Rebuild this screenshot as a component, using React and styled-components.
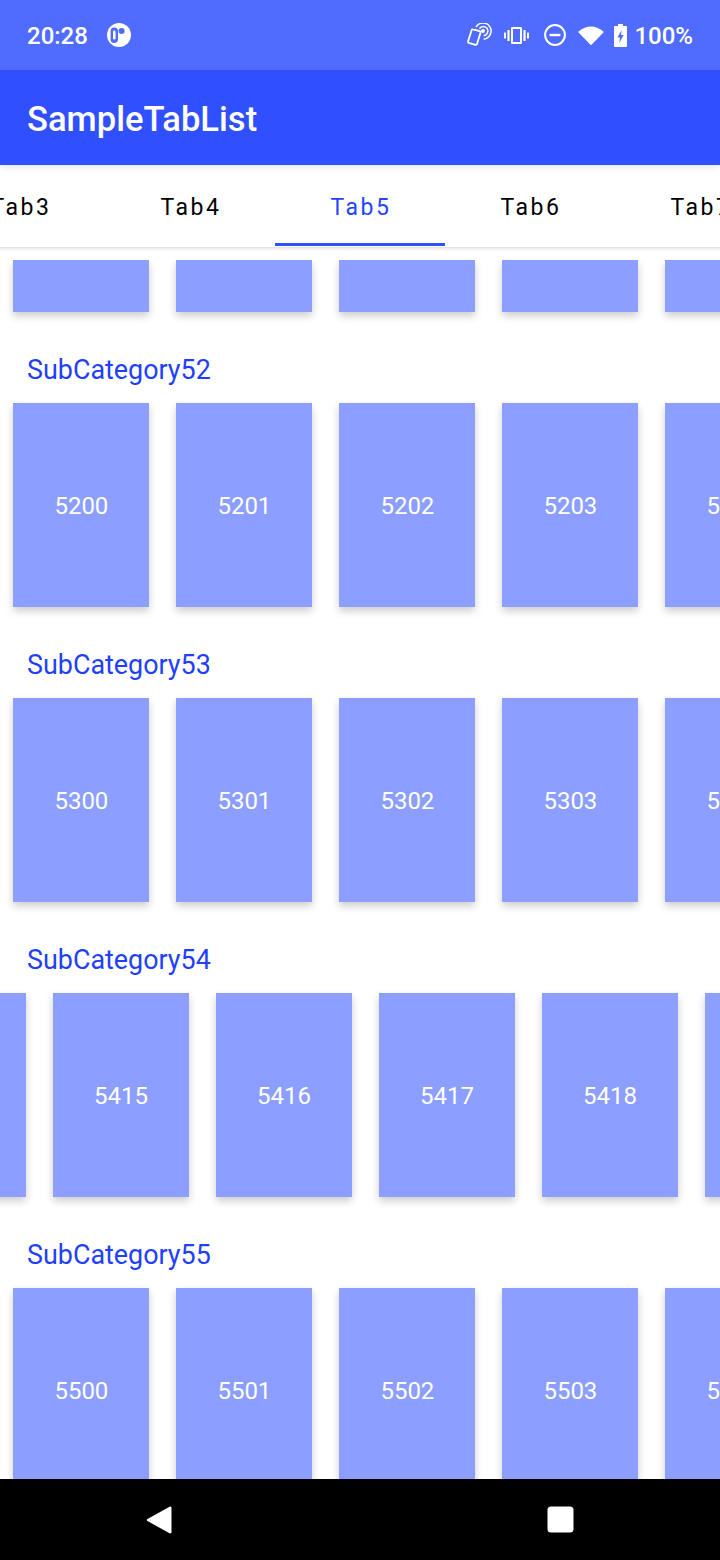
import React from 'react'
import styled, { createGlobalStyle } from 'styled-components'

const GlobalStyle = createGlobalStyle`
  html, body { margin: 0; padding: 0; background: #fff; }
  body { font-family: Roboto, "Liberation Sans", sans-serif; }
`

const Screen = styled.div`
  width: 720px;
  height: 1560px;
  display: flex;
  flex-direction: column;
  overflow: hidden;
  background: #fff;
`

const StatusBar = styled.div`
  height: 70px;
  flex: none;
  display: flex;
  align-items: center;
  justify-content: space-between;
  padding: 0 27px;
  background: #4f6cff;
  color: #fff;
  font-size: 24px;
  font-weight: 500;
`

const StatusLeft = styled.div`
  display: flex;
  align-items: center;
  gap: 19px;
`

const StatusRight = styled.div`
  display: flex;
  align-items: center;
`

const StatusText = styled.span`
  padding-top: 2px;
  margin-left: ${p => p.$gap || 0}px;
`

const StatusIcon = styled.svg`
  display: block;
  flex: none;
  margin-left: ${p => p.$gap || 0}px;
`

const AppBar = styled.div`
  height: 95px;
  flex: none;
  box-sizing: border-box;
  display: flex;
  align-items: center;
  padding: 3px 27px 0;
  background: #304ffe;
  color: #fff;
  font-size: 34.6px;
  font-weight: 500;
  position: relative;
  z-index: 2;
  box-shadow: 0 2px 6px rgba(0, 0, 0, 0.12);
`

const TabStrip = styled.div`
  height: 82px;
  flex: none;
  display: flex;
  margin-left: -65px;
  width: 850px;
  background: #fff;
  position: relative;
  z-index: 1;
  box-shadow: 0 1px 4px rgba(0, 0, 0, 0.18);
`

const Tab = styled.div`
  width: 170px;
  flex: none;
  box-sizing: border-box;
  display: flex;
  align-items: center;
  justify-content: center;
  font-size: 23px;
  font-weight: 450;
  letter-spacing: 2.5px;
  color: ${p => (p.$active ? '#2444ff' : '#000')};
  border-bottom: 3px solid ${p => (p.$active ? '#304ffe' : 'transparent')};
  padding: 6px 0 0 2px;
  margin-bottom: 1px;
`

const Feed = styled.div`
  flex: 1;
  min-height: 0;
  margin-top: 13px;
  overflow: hidden;
`

const Label = styled.div`
  height: 34px;
  line-height: 36px;
  margin: 20px 0 4px 27px;
  font-size: 26.9px;
  color: #1f3fff;
`

const Row = styled.div`
  display: flex;
  gap: 27px;
  padding: ${p => (p.$clipped ? 0 : 13)}px 0 20px;
  overflow: hidden;

  > :first-child {
    margin-left: ${p => p.$offset}px;
  }
`

const Card = styled.div`
  width: 136px;
  height: ${p => p.$height}px;
  flex: none;
  box-sizing: border-box;
  padding-top: 2px;
  display: flex;
  align-items: center;
  justify-content: center;
  background: #8c9eff;
  color: #fff;
  font-size: 24px;
  box-shadow: 0 4px 8px rgba(0, 0, 0, 0.2);
`

const NavBar = styled.div`
  height: 81px;
  flex: none;
  display: flex;
  align-items: center;
  justify-content: space-between;
  padding: 0 146px;
  background: #000;
`

const sections = [
  { name: 'SubCategory52', first: 5200, offset: 13.4 },
  { name: 'SubCategory53', first: 5300, offset: 13.4 },
  { name: 'SubCategory54', first: 5414, offset: -110 },
  { name: 'SubCategory55', first: 5500, offset: 13.4 },
]

const PhoneTapIcon = () => (
  <StatusIcon width="25" height="24" viewBox="0 0 25 24" fill="none" stroke="#fff">
    <path d="M6 6.4 L12.6 8.2 Q13.8 8.6 13.5 9.8 L10 21 Q9.6 22.2 8.4 21.8 L1.9 19.9 Q0.7 19.5 1.1 18.3 L4.6 7.2 Q5 6 6 6.4 Z" strokeWidth="1.8" />
    <path d="M9 4.2 A8 8 0 1 1 16.6 16" strokeWidth="1.5" />
    <path d="M12.4 5.6 A4.6 4.6 0 1 1 16.6 12.6" strokeWidth="1.5" />
    <circle cx="16" cy="8" r="2" fill="#fff" stroke="none" />
  </StatusIcon>
)

const VibrateIcon = () => (
  <StatusIcon $gap={12} width="25" height="17" viewBox="0 0 25 17" fill="#fff">
    <path d="M8 0 H17 Q18 0 18 1 V16 Q18 17 17 17 H8 Q7 17 7 16 V1 Q7 0 8 0 Z M9 2 V15 H16 V2 Z" fillRule="evenodd" />
    <rect x="3.4" y="3" width="2.2" height="11" rx="0.6" />
    <rect x="19.4" y="3" width="2.2" height="11" rx="0.6" />
    <rect x="0" y="5.5" width="2" height="6" rx="0.6" />
    <rect x="23" y="5.5" width="2" height="6" rx="0.6" />
  </StatusIcon>
)

const DndIcon = () => (
  <StatusIcon $gap={15} width="22" height="22" viewBox="0 0 22 22" fill="none" stroke="#fff">
    <circle cx="11" cy="11" r="9.9" strokeWidth="2" />
    <path d="M5.6 11 H16.4" strokeWidth="2.4" />
  </StatusIcon>
)

const WifiIcon = () => (
  <StatusIcon $gap={12} width="26" height="19" viewBox="0 0 26 19" fill="#fff">
    <path d="M0.6 5.4 Q13 -4.6 25.4 5.4 Q26 6 25.4 6.6 L13.8 18.6 Q13 19.2 12.2 18.6 L0.6 6.6 Q0 6 0.6 5.4 Z" />
  </StatusIcon>
)

const BatteryIcon = () => (
  <StatusIcon $gap={10} width="13" height="23" viewBox="0 0 13 23" fill="#fff">
    <path d="M4 0 H9 V2 H12 Q13 2 13 3 V22 Q13 23 12 23 H1 Q0 23 0 22 V3 Q0 2 1 2 H4 Z M7.6 6 L3.4 13.5 H6 L5.4 19 L9.6 11.1 H7 Z" fillRule="evenodd" />
  </StatusIcon>
)

const AppIcon = () => (
  <svg width="24" height="24" viewBox="0 0 24 24">
    <circle cx="12" cy="12" r="12" fill="#fff" />
    <rect x="3.6" y="4.4" width="7.4" height="15.6" rx="3.7" fill="#4f6cff" />
    <rect x="6" y="7.6" width="2.6" height="9" rx="1.3" fill="#fff" />
    <circle cx="14.6" cy="8" r="3" fill="#4f6cff" />
  </svg>
)

const BackIcon = () => (
  <svg width="26" height="30" viewBox="0 0 26 30">
    <path d="M24 1.6 Q25.5 1 25.5 3 V27 Q25.5 29 23.5 28.3 L1.5 16 Q0 15 1.5 14 Z" fill="#fff" />
  </svg>
)

const SquareIcon = () => (
  <svg width="27" height="27" viewBox="0 0 27 27">
    <rect x="0.5" y="0.5" width="26" height="26" rx="3.5" fill="#fff" />
  </svg>
)

export default function App() {
  return (
    <Screen>
      <GlobalStyle />
      <StatusBar>
        <StatusLeft>
          <StatusText>20:28</StatusText>
          <AppIcon />
        </StatusLeft>
        <StatusRight>
          <PhoneTapIcon />
          <VibrateIcon />
          <DndIcon />
          <WifiIcon />
          <BatteryIcon />
          <StatusText $gap={7}>100%</StatusText>
        </StatusRight>
      </StatusBar>
      <AppBar>SampleTabList</AppBar>
      <TabStrip>
        <Tab>Tab3</Tab>
        <Tab>Tab4</Tab>
        <Tab $active>Tab5</Tab>
        <Tab>Tab6</Tab>
        <Tab>Tab7</Tab>
      </TabStrip>
      <Feed>
        <Row $clipped $offset={13.4}>
          {[0, 1, 2, 3, 4].map(i => <Card key={i} $height={52} />)}
        </Row>
        {sections.map(section => (
          <div key={section.name}>
            <Label>{section.name}</Label>
            <Row $offset={section.offset}>
              {[0, 1, 2, 3, 4, 5].map(i => (
                <Card key={i} $height={204}>{section.first + i}</Card>
              ))}
            </Row>
          </div>
        ))}
      </Feed>
      <NavBar>
        <BackIcon />
        <SquareIcon />
      </NavBar>
    </Screen>
  )
}
